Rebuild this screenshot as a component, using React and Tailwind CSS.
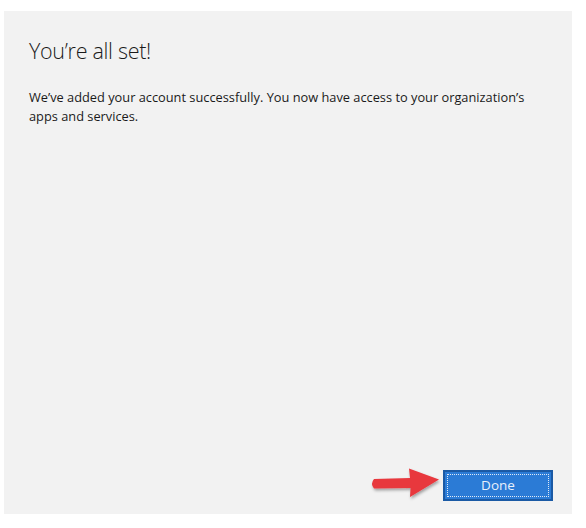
import React from "react";

const Arrow = () => (
  <svg width="74" height="38" viewBox="0 0 74 38" className="mt-[1px]">
    <defs>
      <filter id="sh" x="-20%" y="-30%" width="140%" height="170%">
        <feDropShadow dx="1" dy="2" stdDeviation="1.5" floodColor="#000" floodOpacity="0.35" />
      </filter>
    </defs>
    <g filter="url(#sh)">
      <path d="M5 12 L41 11 L40 1.5 L70 12.5 L41 30 L41.5 21 L5 21.5 Q1 16.8 5 12 Z" fill="#e8373e" />
    </g>
  </svg>
);

export default function App() {
  return (
    <div className="w-[586px] h-[528px] bg-white pt-[11px] pl-[4px]" style={{ fontFamily: '"Open Sans", "Noto Sans", sans-serif' }}>
      <div className="w-[568px] h-[503px] bg-[#f2f2f2] flex flex-col px-[25px]">
        <h1 className="text-[21.5px] font-light text-[#1a1a1a] mt-[25px] leading-[30px] tracking-[-0.3px]">You’re all set!</h1>
        <p className="text-[12.8px] text-[#1a1a1a] mt-[22px] leading-[19px] w-[515px]">
          We’ve added your account successfully. You now have access to your organization’s apps and services.
        </p>
        <div className="flex-1" />
        <div className="flex justify-end items-center mb-[9px] -mr-[6px]">
          <Arrow />
          <button className="w-[110px] h-[31px] bg-[#2b7bd6] border-2 border-[#1b5aa5] p-[2px]">
            <div className="w-full h-full border border-dotted border-[#dfe9f5] flex items-center justify-center text-[13.5px] text-[#e8f0fb]">
              Done
            </div>
          </button>
        </div>
      </div>
    </div>
  );
}
